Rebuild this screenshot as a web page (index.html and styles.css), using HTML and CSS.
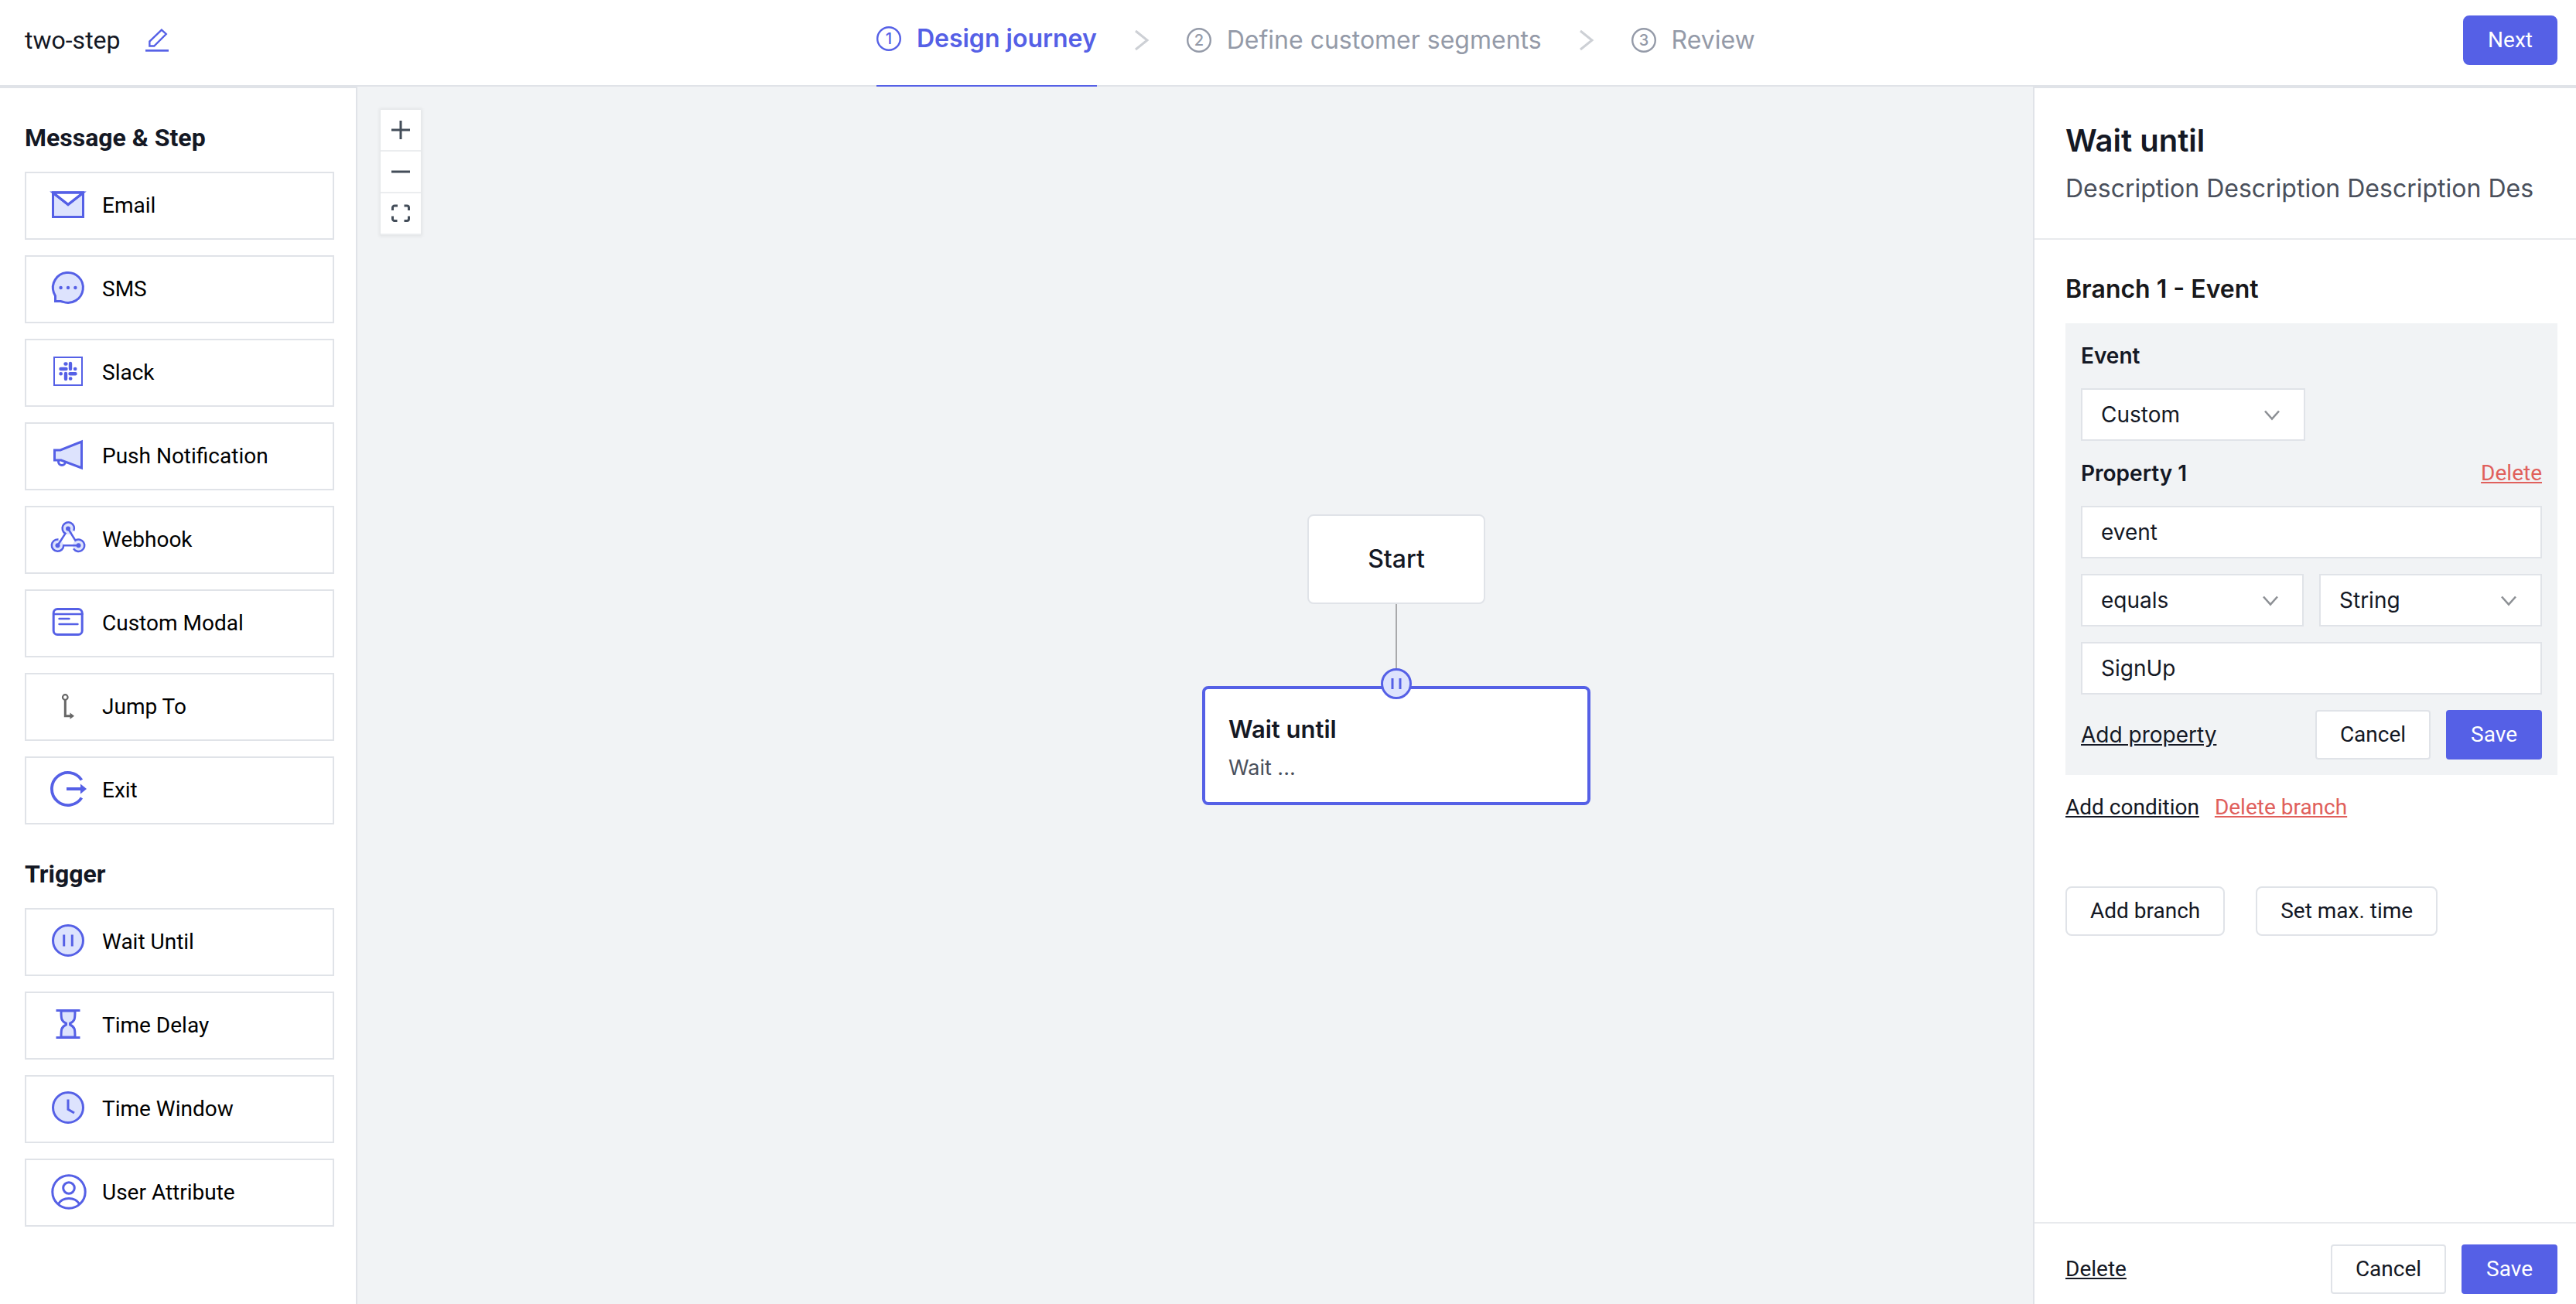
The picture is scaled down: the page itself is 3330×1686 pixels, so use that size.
FILE: index.html
```html
<!DOCTYPE html>
<html lang="en">
<head>
<meta charset="utf-8">
<title>two-step</title>
<link rel="stylesheet" href="styles.css">
</head>
<body>
<header class="topbar">
  <div class="journey-name">
    <span>two-step</span>
    <button class="icon-button" aria-label="Rename journey">
      <svg class="edit-icon" viewBox="0 0 28 28" fill="none" stroke="currentColor" stroke-width="2.5"><path d="M0 26.5h28"/><path d="M5 21V15.500L19.500 1.500 25 6.500 10.500 21z" stroke-width="2.2"/></svg>
    </button>
  </div>
  <nav class="steps">
    <a class="step step-active" href="#design">
      <svg class="step-number" viewBox="0 0 32 32"><circle cx="16" cy="16" r="14.800"/><text x="16" y="23">1</text></svg>
      <span>Design journey</span>
    </a>
    <svg class="step-arrow" viewBox="0 0 20 28"><path d="M2 2l15 12L2 26"/></svg>
    <a class="step" href="#segments">
      <svg class="step-number" viewBox="0 0 32 32"><circle cx="16" cy="16" r="14.800"/><text x="16" y="23">2</text></svg>
      <span>Define customer segments</span>
    </a>
    <svg class="step-arrow" viewBox="0 0 20 28"><path d="M2 2l15 12L2 26"/></svg>
    <a class="step" href="#review">
      <svg class="step-number" viewBox="0 0 32 32"><circle cx="16" cy="16" r="14.800"/><text x="16" y="23">3</text></svg>
      <span>Review</span>
    </a>
  </nav>
  <button class="button button-primary button-round">Next</button>
</header>

<main class="workspace">
  <aside class="palette">
    <section class="palette-group">
      <h2 class="palette-title">Message &amp; Step</h2>
      <div class="palette-list">
        <button class="palette-item"><svg class="item-icon" viewBox="0 0 48 48"><path d="M4.500 7h39v31.500h-39z" fill="#dde3fd"/><path d="M4.500 7h39L24 22.500z" fill="#fff"/><path d="M4.500 7h39v31.500h-39z"/><path d="M4.500 7.500L24 22.500 43.500 7.500"/></svg>Email</button>
        <button class="palette-item"><svg class="item-icon" viewBox="0 0 48 48"><path d="M5.500 28.500A19.500 19.500 0 1 1 17 40.200L14.500 39.500H7.500V32.500z" fill="#dde3fd"/><g class="solid"><circle cx="14.600" cy="22" r="2.200"/><circle cx="24" cy="22" r="2.200"/><circle cx="33.400" cy="22" r="2.200"/></g></svg>SMS</button>
        <button class="palette-item"><svg class="item-icon" viewBox="0 0 48 48"><path d="M6 4h36v36H6z" stroke-width="2"/><path d="M27 12v7M14.500 19h7M26.500 25.200h7M21 25v7M21 12.500v.1M20.500 12.500h1M33 19h.3M14.500 25.200h.3M27 31.500h.3" stroke-width="4.400" stroke-linecap="round"/></svg>Slack</button>
        <button class="palette-item"><svg class="item-icon" viewBox="0 0 48 48"><circle cx="16" cy="31" r="4.500" fill="#fff"/><path d="M6.500 16H14L41.500 5v34L15 29H6.500z" fill="#dde3fd"/></svg>Push Notification</button>
        <button class="palette-item"><svg class="item-icon" viewBox="0 0 48 48"><g fill="#dde3fd" stroke="none"><circle cx="24" cy="9.500" r="7.500"/><circle cx="10.500" cy="31.200" r="7.500"/><circle cx="37.500" cy="31.200" r="7.500"/></g><g stroke-width="2.500"><path d="M10.500 31.200L20.500 15.800A7.700 7.700 0 1 1 31.300 12.200"/><path d="M24 9.500L33.400 24.700A7.700 7.700 0 1 1 31 35.300"/><path d="M37.500 31.200H18.200A7.700 7.700 0 1 1 11.500 23.500"/></g><g class="solid"><circle cx="24" cy="9.500" r="3"/><circle cx="10.500" cy="31.200" r="3"/><circle cx="37.500" cy="31.200" r="3"/></g></svg>Webhook</button>
        <button class="palette-item"><svg class="item-icon" viewBox="0 0 48 48"><rect x="5.200" y="5.500" width="37" height="33" rx="5"/><path d="M5.500 12h37M12.500 18h13M12.500 25h24" stroke-width="2.400" stroke-linecap="round"/></svg>Custom Modal</button>
        <button class="palette-item"><svg class="item-icon jump" viewBox="0 0 48 48"><circle cx="20.300" cy="11.500" r="3.300" stroke-width="2.200"/><path d="M20.300 15v20.700H28"/><path d="M26.500 31.500l5.500 4.200-5.500 4z" fill="#666" stroke="none"/></svg>Jump To</button>
        <button class="palette-item"><svg class="item-icon" viewBox="0 0 48 48"><path d="M41.500 10.500A21 21 0 1 0 41.500 33.500" stroke-width="3.800"/><path d="M22 22h18" stroke-width="4"/><path d="M40 15.500l8 6.500-8 6.500z" class="solid"/></svg>Exit</button>
      </div>
    </section>
    <section class="palette-group">
      <h2 class="palette-title">Trigger</h2>
      <div class="palette-list">
        <button class="palette-item"><svg class="item-icon" viewBox="0 0 48 48"><circle cx="24" cy="22" r="19.500" fill="#dde3fd"/><path d="M18.700 14.500v15M29.300 14.500v15"/></svg>Wait Until</button>
        <button class="palette-item"><svg class="item-icon" viewBox="0 0 48 48"><path d="M15 5c0 10 0 13 6.500 16.200v1.600C15 26 15 29 15 39h18c0-10 0-13-6.500-16.200v-1.600C33 18 33 15 33 5z" fill="#dde3fd"/><path d="M8.500 4.500h31M8.500 39.500h31"/></svg>Time Delay</button>
        <button class="palette-item"><svg class="item-icon" viewBox="0 0 48 48"><circle cx="24" cy="22" r="19.500" fill="#dde3fd"/><path d="M24 11.500v12.800l8 4.700"/></svg>Time Window</button>
        <button class="palette-item"><svg class="item-icon" viewBox="0 0 48 48"><circle cx="25" cy="23" r="21.200"/><circle cx="25" cy="18" r="7.300"/><path d="M11.500 38.500C14.500 33.500 20 31.500 25 31.500s10.500 2 13.500 7"/></svg>User Attribute</button>
      </div>
    </section>
  </aside>

  <section class="canvas" aria-label="Journey canvas">
    <div class="zoom-controls">
      <button class="zoom-button" aria-label="Zoom in"><svg viewBox="0 0 24 24"><path d="M0 12h24M12 0v24"/></svg></button>
      <button class="zoom-button" aria-label="Zoom out"><svg viewBox="0 0 24 24"><path d="M0 12h24"/></svg></button>
      <button class="zoom-button" aria-label="Fit view"><svg viewBox="0 0 24 24"><path d="M1.500 8V4.500a2.500 2.500 0 0 1 2.500-2.500h4M16.500 2H20a2.500 2.500 0 0 1 2.500 2.500V8M22.500 15.500V19a2.500 2.500 0 0 1-2.500 2.500h-3.500M7.500 21.500H4A2.500 2.500 0 0 1 1.500 19v-3.500"/></svg></button>
    </div>
    <div class="node node-start">Start</div>
    <div class="edge"></div>
    <div class="node node-wait">
      <strong class="node-title">Wait until</strong>
      <span class="node-text">Wait ...</span>
      <svg class="node-badge" viewBox="0 0 40 40"><circle cx="20" cy="20" r="18.500"/><path d="M15 13v14M25 13v14"/></svg>
    </div>
  </section>

  <aside class="settings">
    <div class="settings-head">
      <h1 class="settings-title">Wait until</h1>
      <p class="settings-description">Description Description Description Des</p>
    </div>
    <form class="settings-body">
      <h2 class="branch-title">Branch 1 - Event</h2>
      <div class="branch">
        <label class="field-label" for="event-type">Event</label>
        <div class="select select-event">
          <select id="event-type"><option>Custom</option></select>
          <svg class="chevron" viewBox="0 0 22 14"><path d="M2 1.500l9 10 9-10"/></svg>
        </div>
        <div class="property-head">
          <label class="field-label" for="property-key">Property 1</label>
          <a class="link link-danger" href="#delete-property">Delete</a>
        </div>
        <input class="text-input" id="property-key" type="text" value="event">
        <div class="select-pair">
          <div class="select">
            <select aria-label="Comparison"><option>equals</option></select>
            <svg class="chevron" viewBox="0 0 22 14"><path d="M2 1.500l9 10 9-10"/></svg>
          </div>
          <div class="select">
            <select aria-label="Value type"><option>String</option></select>
            <svg class="chevron" viewBox="0 0 22 14"><path d="M2 1.500l9 10 9-10"/></svg>
          </div>
        </div>
        <input class="text-input" type="text" aria-label="Value" value="SignUp">
        <div class="actions">
          <a class="link link-property" href="#add-property">Add property</a>
          <button class="button" type="button">Cancel</button>
          <button class="button button-primary" type="button">Save</button>
        </div>
      </div>
      <div class="branch-links">
        <a class="link" href="#add-condition">Add condition</a>
        <a class="link link-danger" href="#delete-branch">Delete branch</a>
      </div>
      <div class="branch-buttons">
        <button class="button button-round" type="button">Add branch</button>
        <button class="button button-round" type="button">Set max. time</button>
      </div>
    </form>
    <footer class="settings-foot actions">
      <a class="link" href="#delete-step">Delete</a>
      <button class="button" type="button">Cancel</button>
      <button class="button button-primary" type="button">Save</button>
    </footer>
  </aside>
</main>
</body>
</html>
```
FILE: styles.css
```css
:root {
  --accent: #5560e6;
  --line: #e0e3e8;
  --ink: #141824;
  --muted: #949aa8;
  --surface: #f1f3f5;
  --danger: #e0605c;
  --inter: Inter, "Liberation Sans", sans-serif;
  --roboto: Roboto, "Liberation Sans", sans-serif;
}

* {
  box-sizing: border-box;
}

body {
  margin: 0;
  min-height: 100vh;
  display: flex;
  flex-direction: column;
  background: #fff;
  color: var(--ink);
  font-family: var(--roboto);
  font-size: 28px;
  line-height: 44px;
}

h1, h2, p {
  margin: 0;
}

button, input, select {
  margin: 0;
  font: inherit;
  color: inherit;
}

svg {
  display: block;
  flex: none;
}

/* Top bar */
.topbar {
  height: 112px;
  padding: 0 24px 6px 32px;
  display: flex;
  align-items: center;
  justify-content: space-between;
  border-bottom: 2px solid var(--line);
}

.journey-name {
  display: flex;
  align-items: center;
  gap: 32px;
  font-size: 32px;
}

.icon-button {
  padding: 0;
  border: 0;
  background: none;
  color: var(--accent);
}

.edit-icon {
  width: 30px;
  height: 30px;
}

.steps {
  align-self: stretch;
  margin-bottom: -8px;
  display: flex;
  align-items: center;
  gap: 48px;
  font-family: var(--inter);
  font-size: 32px;
}

.step {
  height: 100%;
  padding-bottom: 8px;
  display: flex;
  align-items: center;
  gap: 20px;
  color: var(--muted);
  text-decoration: none;
}

.step-active {
  padding-bottom: 10px;
  border-bottom: 2px solid var(--accent);
  color: var(--accent);
  font-weight: 600;
}

.step-number {
  width: 32px;
  height: 32px;
}

.step-number circle {
  fill: none;
  stroke: currentColor;
  stroke-width: 2.4;
}

.step-number text {
  fill: currentColor;
  font: 500 20px var(--inter);
  text-anchor: middle;
}

.step-arrow {
  width: 20px;
  height: 28px;
  margin-bottom: 8px;
  fill: none;
  stroke: #cdd0d5;
  stroke-width: 3;
}

/* Buttons and links */
.button {
  height: 64px;
  padding: 0 30px;
  border: 2px solid var(--line);
  border-radius: 4px;
  background: #fff;
}

.button-primary {
  border-color: var(--accent);
  background: var(--accent);
  color: #fff;
}

.button-round {
  border-radius: 8px;
}

.link {
  color: var(--ink);
  text-decoration: underline;
}

.link-danger {
  color: var(--danger);
}

.link-property {
  font-family: var(--inter);
}

/* Workspace */
.workspace {
  flex: 1;
  display: grid;
  grid-template-columns: 462px 1fr 702px;
}

.palette {
  padding: 0 28px 40px 32px;
  border-top: 2px solid var(--line);
  border-right: 2px solid var(--line);
}

.palette-group {
  padding-top: 40px;
}

.palette-title {
  margin-bottom: 20px;
  font-size: 32px;
  line-height: 48px;
  font-weight: 700;
}

.palette-list {
  display: grid;
  gap: 20px;
}

.palette-item {
  height: 88px;
  padding: 0 30px;
  display: flex;
  align-items: center;
  gap: 20px;
  border: 2px solid var(--line);
  background: #fff;
  color: #000;
}

.item-icon {
  width: 48px;
  height: 48px;
  fill: none;
  stroke: var(--accent);
  stroke-width: 3;
  overflow: visible;
}

.item-icon .solid {
  fill: var(--accent);
  stroke: none;
}

.jump {
  stroke: #666;
}

/* Canvas */
.canvas {
  position: relative;
  background: var(--surface);
  font-family: var(--inter);
}

.zoom-controls {
  position: absolute;
  left: 30px;
  top: 30px;
  box-shadow: 0 0 4px 2px rgba(0, 0, 0, 0.06);
}

.zoom-button {
  width: 52px;
  height: 54px;
  padding: 0 14px;
  display: flex;
  align-items: center;
  border: 0;
  border-bottom: 2px solid #ebedef;
  background: #fff;
}

.zoom-button svg {
  width: 24px;
  height: 24px;
  fill: none;
  stroke: #434d59;
  stroke-width: 3;
}

.node {
  position: absolute;
  border: 2px solid var(--line);
  border-radius: 8px;
  background: #fff;
}

.node-start {
  left: 1228px;
  top: 553px;
  width: 230px;
  height: 116px;
  display: grid;
  place-items: center;
  font-size: 32px;
  font-weight: 500;
}

.edge {
  position: absolute;
  left: 1342px;
  top: 669px;
  width: 2px;
  height: 106px;
  background: #a9a9ab;
}

.node-wait {
  left: 1092px;
  top: 775px;
  width: 502px;
  height: 154px;
  padding: 30px;
  display: flex;
  flex-direction: column;
  gap: 6px;
  border: 4px solid var(--accent);
}

.node-title {
  font-size: 31px;
  font-weight: 600;
}

.node-text {
  color: #4a505c;
  font-size: 27px;
}

.node-badge {
  position: absolute;
  left: 227px;
  top: -27px;
  width: 40px;
  height: 40px;
  fill: #dde3fd;
  stroke: var(--accent);
  stroke-width: 3;
}

/* Settings panel */
.settings {
  display: flex;
  flex-direction: column;
  border-top: 2px solid var(--line);
  border-left: 2px solid var(--line);
  font-family: var(--inter);
}

.settings-head {
  padding: 40px 24px 42px 40px;
  border-bottom: 2px solid #e8eaed;
}

.settings-title {
  margin-bottom: 12px;
  font-size: 40px;
  line-height: 56px;
  font-weight: 600;
}

.settings-description {
  color: #4a505c;
  font-size: 32px;
  line-height: 44px;
  white-space: nowrap;
}

.settings-body {
  flex: 1;
  padding: 40px 24px 40px 40px;
}

.branch-title {
  margin-bottom: 20px;
  color: #18181b;
  font-size: 32px;
  line-height: 48px;
  font-weight: 600;
}

.branch {
  padding: 20px;
  display: flex;
  flex-direction: column;
  gap: 20px;
  background: var(--surface);
}

.field-label {
  font-weight: 600;
}

.select {
  position: relative;
}

.select-event {
  width: 290px;
}

.select select,
.text-input {
  display: block;
  width: 100%;
  height: 68px;
  padding: 0 24px;
  border: 2px solid var(--line);
  border-radius: 0;
  background: #fff;
  appearance: none;
}

.chevron {
  position: absolute;
  right: 32px;
  top: 28px;
  width: 22px;
  height: 14px;
  fill: none;
  stroke: #8d9095;
  stroke-width: 2.6;
  pointer-events: none;
}

.property-head {
  display: flex;
  justify-content: space-between;
}

.select-pair {
  display: grid;
  grid-template-columns: 1fr 1fr;
  gap: 20px;
}

.actions {
  display: flex;
  align-items: center;
  gap: 20px;
}

.actions .link {
  margin-right: auto;
}

.button,
.link:not(.link-property) {
  font-family: var(--roboto);
}

.branch-links {
  margin-top: 20px;
  display: flex;
  gap: 20px;
}

.branch-buttons {
  margin-top: 80px;
  display: flex;
  gap: 40px;
}

.settings-foot {
  padding: 27px 24px 13px 40px;
  border-top: 2px solid #e8eaed;
}
```
